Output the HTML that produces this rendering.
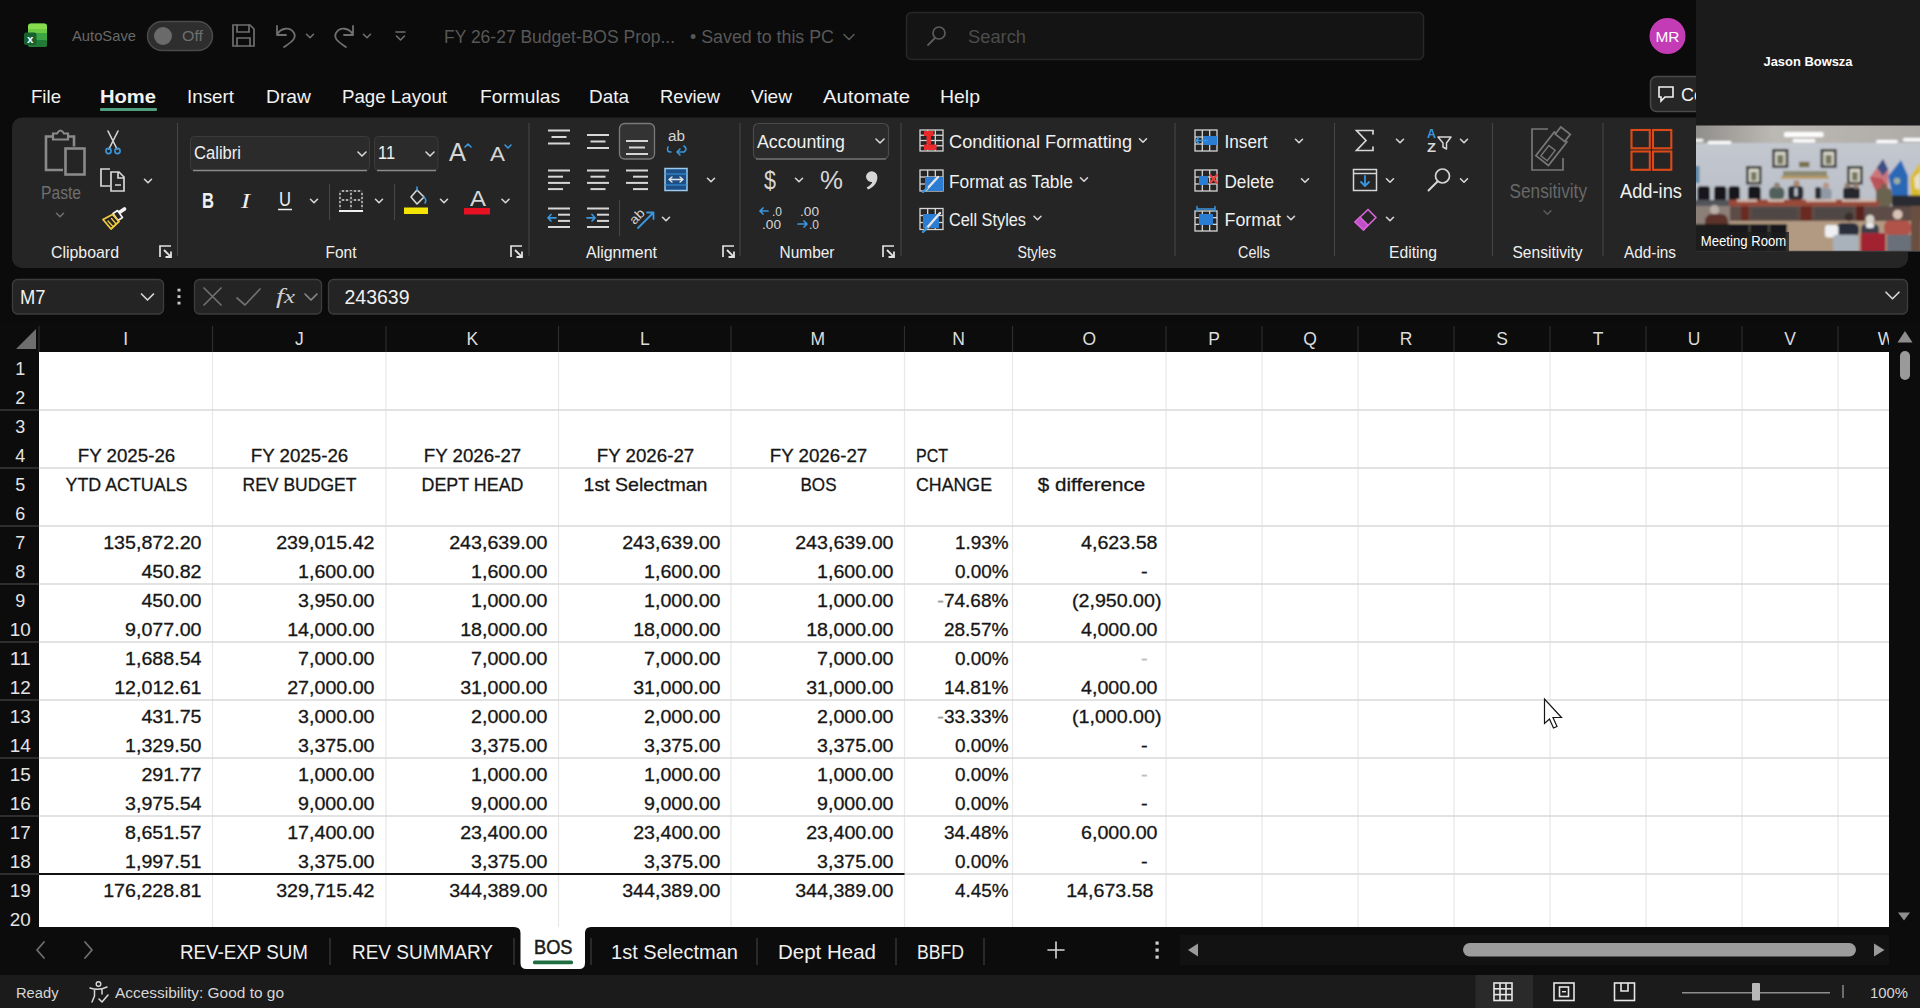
<!DOCTYPE html>
<html lang="en"><head><meta charset="utf-8"><title>FY 26-27 Budget-BOS Proposed - Excel</title>
<style>html,body{margin:0;padding:0;background:#0b0b0b;overflow:hidden}svg{display:block}text{font-family:"Liberation Sans",sans-serif;white-space:pre}</style></head>
<body>
<svg width="1920" height="1008" viewBox="0 0 1920 1008">
<rect x="0" y="0" width="1920" height="1008" fill="#0b0b0b"/>
<rect x="28" y="23.5" width="19" height="23.5" fill="#2f9a3f" rx="3"/>
<rect x="28" y="23.5" width="19" height="8.5" fill="#86dc4c" rx="3"/>
<rect x="28" y="29" width="19" height="4" fill="#6ccb42"/>
<rect x="28" y="33" width="19" height="7" fill="#3aa744"/>
<rect x="28" y="40" width="19" height="7" fill="#227a36" rx="2"/>
<rect x="24" y="32.5" width="12.5" height="12.5" fill="#17602f" rx="2"/>
<text x="27" y="42.5" font-size="11.5" fill="#ffffff" font-weight="bold">x</text>
<text x="72" y="41" font-size="14.5" fill="#686868" textLength="64" lengthAdjust="spacingAndGlyphs">AutoSave</text>
<rect x="147.5" y="21.5" width="65" height="29" fill="#2e2e2e" rx="14.5" stroke="#4a4a4a" stroke-width="1.5"/>
<circle cx="163" cy="36" r="9" fill="#6a6a6a"/>
<text x="182" y="41" font-size="14.5" fill="#6f6f6f" textLength="21" lengthAdjust="spacingAndGlyphs">Off</text>
<path d="M233 25 H250 L254 29 V46 H233 Z" fill="none" stroke="#6f6f6f" stroke-width="1.7" stroke-linejoin="miter" stroke-linecap="round"/>
<path d="M237 25 V32 H249 V25 M237 46 V38 H250 V46" fill="none" stroke="#6f6f6f" stroke-width="1.7" stroke-linejoin="miter" stroke-linecap="round"/>
<path d="M277 26 V35 H286 M277 35 C280 28 290 26 294 33 C297 39 290 43 284 47" fill="none" stroke="#6f6f6f" stroke-width="1.8" stroke-linejoin="round" stroke-linecap="round"/>
<path d="M306.5 34.25 L310 37.75 L313.5 34.25" fill="none" stroke="#6f6f6f" stroke-width="1.6" stroke-linejoin="round" stroke-linecap="round"/>
<path d="M353 26 V35 H344 M353 35 C350 28 340 26 336 33 C333 39 340 43 346 47" fill="none" stroke="#6f6f6f" stroke-width="1.8" stroke-linejoin="round" stroke-linecap="round"/>
<path d="M363.5 34.25 L367 37.75 L370.5 34.25" fill="none" stroke="#6f6f6f" stroke-width="1.6" stroke-linejoin="round" stroke-linecap="round"/>
<path d="M396 32 H405 M396.5 36 L400.5 40 L404.5 36" fill="none" stroke="#6f6f6f" stroke-width="1.6" stroke-linejoin="round" stroke-linecap="round"/>
<text x="444" y="43" font-size="17.5" fill="#585858" textLength="231" lengthAdjust="spacingAndGlyphs">FY 26-27 Budget-BOS Prop...</text>
<text x="690" y="43" font-size="17.5" fill="#585858" textLength="144" lengthAdjust="spacingAndGlyphs">• Saved to this PC</text>
<path d="M844.0 34.5 L849 39.5 L854.0 34.5" fill="none" stroke="#585858" stroke-width="1.6" stroke-linejoin="round" stroke-linecap="round"/>
<rect x="906.5" y="12.5" width="517" height="47" fill="#141414" rx="5" stroke="#272727" stroke-width="1.5"/>
<circle cx="939" cy="33" r="6" fill="none" stroke="#5c5c5c" stroke-width="1.7"/>
<path d="M935 38 L928 45" fill="none" stroke="#5c5c5c" stroke-width="1.8" stroke-linejoin="round" stroke-linecap="round"/>
<text x="968" y="43" font-size="17.5" fill="#4c4c4c" textLength="58" lengthAdjust="spacingAndGlyphs">Search</text>
<circle cx="1667.5" cy="36" r="18" fill="#c43bb6"/>
<text x="1667.5" y="42" font-size="14.5" fill="#ffffff" textLength="24" lengthAdjust="spacingAndGlyphs" text-anchor="middle">MR</text>
<text x="31" y="103" font-size="19" fill="#f2f2f2" textLength="30" lengthAdjust="spacingAndGlyphs">File</text>
<text x="100" y="103" font-size="19" fill="#f2f2f2" textLength="56" lengthAdjust="spacingAndGlyphs" font-weight="bold">Home</text>
<text x="187" y="103" font-size="19" fill="#f2f2f2" textLength="47" lengthAdjust="spacingAndGlyphs">Insert</text>
<text x="266" y="103" font-size="19" fill="#f2f2f2" textLength="45" lengthAdjust="spacingAndGlyphs">Draw</text>
<text x="342" y="103" font-size="19" fill="#f2f2f2" textLength="105" lengthAdjust="spacingAndGlyphs">Page Layout</text>
<text x="480" y="103" font-size="19" fill="#f2f2f2" textLength="80" lengthAdjust="spacingAndGlyphs">Formulas</text>
<text x="589" y="103" font-size="19" fill="#f2f2f2" textLength="40" lengthAdjust="spacingAndGlyphs">Data</text>
<text x="660" y="103" font-size="19" fill="#f2f2f2" textLength="60" lengthAdjust="spacingAndGlyphs">Review</text>
<text x="751" y="103" font-size="19" fill="#f2f2f2" textLength="41" lengthAdjust="spacingAndGlyphs">View</text>
<text x="823" y="103" font-size="19" fill="#f2f2f2" textLength="87" lengthAdjust="spacingAndGlyphs">Automate</text>
<text x="940" y="103" font-size="19" fill="#f2f2f2" textLength="40" lengthAdjust="spacingAndGlyphs">Help</text>
<rect x="100" y="108" width="57" height="3" fill="#4f9f80" rx="1"/>
<rect x="1650.5" y="76.5" width="70" height="35" fill="#262626" rx="6" stroke="#4a4a4a" stroke-width="1.5"/>
<path d="M1659 87 H1673 V97 H1665 L1661 101 V97 H1659 Z" fill="none" stroke="#f2f2f2" stroke-width="1.6" stroke-linejoin="miter" stroke-linecap="round"/>
<text x="1681" y="101" font-size="18" fill="#f2f2f2">Co</text>
<rect x="12" y="117.5" width="1896" height="150.5" fill="#252525" rx="10"/>
<path d="M54 136.5 H46 V170 H63 M68 136.5 H74 V146.5" fill="none" stroke="#8a8a8a" stroke-width="2.6" stroke-linejoin="miter" stroke-linecap="butt"/>
<path d="M53 139.5 V133.5 H57 Q60.5 127.5 64 133.5 H68 V139.5 Z" fill="none" stroke="#8a8a8a" stroke-width="2.2" stroke-linejoin="miter" stroke-linecap="round"/>
<rect x="65.5" y="148.5" width="19" height="26" fill="none" stroke="#8a8a8a" stroke-width="2.6"/>
<text x="41" y="199" font-size="17.5" fill="#6f6f6f" textLength="40" lengthAdjust="spacingAndGlyphs">Paste</text>
<path d="M56.5 213.25 L60 216.75 L63.5 213.25" fill="none" stroke="#6f6f6f" stroke-width="1.6" stroke-linejoin="round" stroke-linecap="round"/>
<path d="M108 131 L117 149 M118 131 L109 149" fill="none" stroke="#d6d6d6" stroke-width="1.6" stroke-linejoin="round" stroke-linecap="round"/>
<circle cx="108.5" cy="151" r="2.6" fill="none" stroke="#3a96dd" stroke-width="1.6"/>
<circle cx="117.5" cy="151" r="2.6" fill="none" stroke="#3a96dd" stroke-width="1.6"/>
<path d="M110 186 H101 V169 H110" fill="none" stroke="#d6d6d6" stroke-width="1.7" stroke-linejoin="miter" stroke-linecap="butt"/>
<path d="M111 172 H119 L124 177 V191 H111 Z M118 172 V178 H124" fill="none" stroke="#d6d6d6" stroke-width="1.7" stroke-linejoin="miter" stroke-linecap="round"/>
<line x1="115" y1="185" x2="121" y2="185" stroke="#d6d6d6" stroke-width="1.5"/>
<path d="M144.5 179.25 L148 182.75 L151.5 179.25" fill="none" stroke="#d6d6d6" stroke-width="1.6" stroke-linejoin="round" stroke-linecap="round"/>
<path d="M124.5 209 L118.5 213" fill="none" stroke="#f4f4f4" stroke-width="3.6" stroke-linejoin="round" stroke-linecap="round"/>
<path d="M113 213.5 L117.5 210.5 L122.5 217.5 L118 220.5 Z" fill="#252525" stroke="#f4f4f4" stroke-width="1.6" stroke-linejoin="round" stroke-linecap="round"/>
<path d="M112.5 214.5 L103 219.5 L111 229 L119 221.5 Z" fill="none" stroke="#f2cb3f" stroke-width="1.8" stroke-linejoin="round" stroke-linecap="round"/>
<path d="M108 221 L113 226.5 M111.5 218.5 L116 224" fill="none" stroke="#f2cb3f" stroke-width="1.3" stroke-linejoin="round" stroke-linecap="round"/>
<text x="51" y="257.5" font-size="17" fill="#f0f0f0" textLength="68" lengthAdjust="spacingAndGlyphs">Clipboard</text>
<path d="M160 257 V246 H171" fill="none" stroke="#e2e2e2" stroke-width="1.7" stroke-linejoin="miter" stroke-linecap="butt"/>
<path d="M164 250 L171 257 M171 251.5 V257 H165.5" fill="none" stroke="#e2e2e2" stroke-width="1.8" stroke-linejoin="miter" stroke-linecap="butt"/>
<line x1="177.5" y1="123" x2="177.5" y2="256" stroke="#444444" stroke-width="1.2"/>
<rect x="190.5" y="136.5" width="179" height="34" fill="#2b2b2b" rx="4" stroke="#3b3b3b" stroke-width="1"/>
<line x1="193" y1="170.5" x2="367" y2="170.5" stroke="#8a8a8a" stroke-width="1.3"/>
<text x="194" y="159" font-size="17.5" fill="#f0f0f0" textLength="47" lengthAdjust="spacingAndGlyphs">Calibri</text>
<path d="M358.0 152.0 L362 156.0 L366.0 152.0" fill="none" stroke="#d6d6d6" stroke-width="1.6" stroke-linejoin="round" stroke-linecap="round"/>
<rect x="374.5" y="136.5" width="63.5" height="34" fill="#2b2b2b" rx="4" stroke="#3b3b3b" stroke-width="1"/>
<line x1="377" y1="170.5" x2="436" y2="170.5" stroke="#8a8a8a" stroke-width="1.3"/>
<text x="378" y="159" font-size="17.5" fill="#f0f0f0" textLength="17" lengthAdjust="spacingAndGlyphs">11</text>
<path d="M426.0 152.0 L430 156.0 L434.0 152.0" fill="none" stroke="#d6d6d6" stroke-width="1.6" stroke-linejoin="round" stroke-linecap="round"/>
<text x="449" y="161" font-size="25" fill="#d6d6d6" textLength="17" lengthAdjust="spacingAndGlyphs">A</text>
<path d="M465 147 L468 144 L471 147" fill="none" stroke="#3a96dd" stroke-width="1.6" stroke-linejoin="round" stroke-linecap="round"/>
<text x="490" y="161" font-size="21" fill="#d6d6d6" textLength="15" lengthAdjust="spacingAndGlyphs">A</text>
<path d="M505 145 L508 148 L511 145" fill="none" stroke="#3a96dd" stroke-width="1.6" stroke-linejoin="round" stroke-linecap="round"/>
<text x="202" y="207.5" font-size="22" fill="#f0f0f0" textLength="12" lengthAdjust="spacingAndGlyphs" font-weight="bold">B</text>
<text x="241" y="207.5" font-size="22" fill="#f0f0f0" textLength="9" lengthAdjust="spacingAndGlyphs" style="font-family:'Liberation Serif',serif" font-style="italic">I</text>
<text x="279" y="206" font-size="20" fill="#f0f0f0" textLength="12" lengthAdjust="spacingAndGlyphs">U</text>
<line x1="278" y1="209.5" x2="292" y2="209.5" stroke="#f0f0f0" stroke-width="1.5"/>
<path d="M310.5 199.25 L314 202.75 L317.5 199.25" fill="none" stroke="#d6d6d6" stroke-width="1.6" stroke-linejoin="round" stroke-linecap="round"/>
<line x1="329.5" y1="184" x2="329.5" y2="220" stroke="#444444" stroke-width="1.2"/>
<path d="M340 191 H362 M340 191 V209 M362 191 V209 M351 191 V209 M340 200 H362" fill="none" stroke="#d6d6d6" stroke-width="1.4" stroke-linejoin="round" stroke-linecap="butt"/>
<path d="M340 191 H362 M340 191 V209 M362 191 V209 M351 191 V209 M340 200 H362" stroke="#252525" stroke-width="1.6" stroke-dasharray="2 2" fill="none"/>
<line x1="339" y1="211" x2="363" y2="211" stroke="#f0f0f0" stroke-width="2"/>
<path d="M375.5 199.25 L379 202.75 L382.5 199.25" fill="none" stroke="#d6d6d6" stroke-width="1.6" stroke-linejoin="round" stroke-linecap="round"/>
<line x1="394.5" y1="184" x2="394.5" y2="220" stroke="#444444" stroke-width="1.2"/>
<path d="M411 197 L417 190 L424 197 L417 204 Z" fill="none" stroke="#d6d6d6" stroke-width="1.6" stroke-linejoin="round" stroke-linecap="round"/>
<path d="M417 190 V187 M424 197 Q427 200 425 203" fill="none" stroke="#3a96dd" stroke-width="1.6" stroke-linejoin="round" stroke-linecap="round"/>
<rect x="404" y="207.5" width="24" height="6.5" fill="#f5e400"/>
<path d="M440.5 199.25 L444 202.75 L447.5 199.25" fill="none" stroke="#d6d6d6" stroke-width="1.6" stroke-linejoin="round" stroke-linecap="round"/>
<text x="470" y="205.5" font-size="22" fill="#d6d6d6" textLength="16" lengthAdjust="spacingAndGlyphs">A</text>
<rect x="464" y="208" width="26" height="6.5" fill="#e81123"/>
<path d="M502.0 199.25 L505.5 202.75 L509.0 199.25" fill="none" stroke="#d6d6d6" stroke-width="1.6" stroke-linejoin="round" stroke-linecap="round"/>
<text x="325.5" y="257.5" font-size="17" fill="#f0f0f0" textLength="31" lengthAdjust="spacingAndGlyphs">Font</text>
<path d="M511 257 V246 H522" fill="none" stroke="#e2e2e2" stroke-width="1.7" stroke-linejoin="miter" stroke-linecap="butt"/>
<path d="M515 250 L522 257 M522 251.5 V257 H516.5" fill="none" stroke="#e2e2e2" stroke-width="1.8" stroke-linejoin="miter" stroke-linecap="butt"/>
<line x1="529" y1="123" x2="529" y2="256" stroke="#444444" stroke-width="1.2"/>
<line x1="548.0" y1="130.5" x2="570.0" y2="130.5" stroke="#d6d6d6" stroke-width="2"/>
<line x1="551.5" y1="137.0" x2="566.5" y2="137.0" stroke="#d6d6d6" stroke-width="2"/>
<line x1="548.0" y1="143.5" x2="570.0" y2="143.5" stroke="#d6d6d6" stroke-width="2"/>
<line x1="587.0" y1="135.0" x2="609.0" y2="135.0" stroke="#d6d6d6" stroke-width="2"/>
<line x1="590.5" y1="141.5" x2="605.5" y2="141.5" stroke="#d6d6d6" stroke-width="2"/>
<line x1="587.0" y1="148.0" x2="609.0" y2="148.0" stroke="#d6d6d6" stroke-width="2"/>
<rect x="619.5" y="123.5" width="35" height="35.5" fill="#333333" rx="5" stroke="#7a7a7a" stroke-width="1.3"/>
<line x1="626.0" y1="141.0" x2="648.0" y2="141.0" stroke="#d6d6d6" stroke-width="2"/>
<line x1="629.0" y1="147.5" x2="645.0" y2="147.5" stroke="#d6d6d6" stroke-width="2"/>
<line x1="626.0" y1="154.0" x2="648.0" y2="154.0" stroke="#d6d6d6" stroke-width="2"/>
<text x="668" y="141" font-size="14" fill="#d6d6d6" textLength="17" lengthAdjust="spacingAndGlyphs">ab</text>
<path d="M668 147 Q666 152 671 152 M678 152 H684 Q688 149 684 146" fill="none" stroke="#3a96dd" stroke-width="1.6" stroke-linejoin="round" stroke-linecap="round"/>
<path d="M680 149 L677 152 L680 155" fill="none" stroke="#3a96dd" stroke-width="1.6" stroke-linejoin="round" stroke-linecap="round"/>
<line x1="548" y1="170.5" x2="570" y2="170.5" stroke="#d6d6d6" stroke-width="2"/>
<line x1="548" y1="176.7" x2="563" y2="176.7" stroke="#d6d6d6" stroke-width="2"/>
<line x1="548" y1="182.9" x2="570" y2="182.9" stroke="#d6d6d6" stroke-width="2"/>
<line x1="548" y1="189.1" x2="563" y2="189.1" stroke="#d6d6d6" stroke-width="2"/>
<line x1="587.0" y1="170.5" x2="609.0" y2="170.5" stroke="#d6d6d6" stroke-width="2"/>
<line x1="590.5" y1="176.7" x2="605.5" y2="176.7" stroke="#d6d6d6" stroke-width="2"/>
<line x1="587.0" y1="182.9" x2="609.0" y2="182.9" stroke="#d6d6d6" stroke-width="2"/>
<line x1="590.5" y1="189.1" x2="605.5" y2="189.1" stroke="#d6d6d6" stroke-width="2"/>
<line x1="626" y1="170.5" x2="648" y2="170.5" stroke="#d6d6d6" stroke-width="2"/>
<line x1="633" y1="176.7" x2="648" y2="176.7" stroke="#d6d6d6" stroke-width="2"/>
<line x1="626" y1="182.9" x2="648" y2="182.9" stroke="#d6d6d6" stroke-width="2"/>
<line x1="633" y1="189.1" x2="648" y2="189.1" stroke="#d6d6d6" stroke-width="2"/>
<rect x="665" y="168.5" width="22" height="22" fill="#1b4f86" stroke="#9ccbf0" stroke-width="1.5"/>
<path d="M665 174 H687 M665 185 H687" fill="none" stroke="#3a96dd" stroke-width="1.2" stroke-linejoin="round" stroke-linecap="round"/>
<path d="M669 179.5 H683 M672 177 L669 179.5 L672 182 M680 177 L683 179.5 L680 182" fill="none" stroke="#e6e6e6" stroke-width="1.3" stroke-linejoin="round" stroke-linecap="round"/>
<path d="M707.5 178.25 L711 181.75 L714.5 178.25" fill="none" stroke="#d6d6d6" stroke-width="1.6" stroke-linejoin="round" stroke-linecap="round"/>
<line x1="548" y1="208.5" x2="570" y2="208.5" stroke="#d6d6d6" stroke-width="2"/>
<line x1="548" y1="227" x2="570" y2="227" stroke="#d6d6d6" stroke-width="2"/>
<line x1="558" y1="214.7" x2="570" y2="214.7" stroke="#d6d6d6" stroke-width="2"/>
<line x1="558" y1="220.9" x2="570" y2="220.9" stroke="#d6d6d6" stroke-width="2"/>
<path d="M556 217.8 H548 M551 214.5 L548 217.8 L551 221" fill="none" stroke="#3a96dd" stroke-width="1.7" stroke-linejoin="round" stroke-linecap="round"/>
<line x1="587" y1="208.5" x2="609" y2="208.5" stroke="#d6d6d6" stroke-width="2"/>
<line x1="587" y1="227" x2="609" y2="227" stroke="#d6d6d6" stroke-width="2"/>
<line x1="597" y1="214.7" x2="609" y2="214.7" stroke="#d6d6d6" stroke-width="2"/>
<line x1="597" y1="220.9" x2="609" y2="220.9" stroke="#d6d6d6" stroke-width="2"/>
<path d="M587 217.8 H595 M592 214.5 L595 217.8 L592 221" fill="none" stroke="#3a96dd" stroke-width="1.7" stroke-linejoin="round" stroke-linecap="round"/>
<line x1="619.5" y1="200" x2="619.5" y2="236" stroke="#444444" stroke-width="1.2"/>
<g transform="rotate(-45 638 216)"><text x="629" y="220" font-size="13" fill="#d6d6d6" textLength="16" lengthAdjust="spacingAndGlyphs">ab</text></g>
<path d="M638 228 L653 213 M647 212.5 H653.5 V219" fill="none" stroke="#3a96dd" stroke-width="1.8" stroke-linejoin="round" stroke-linecap="round"/>
<path d="M662.5 217.25 L666 220.75 L669.5 217.25" fill="none" stroke="#d6d6d6" stroke-width="1.6" stroke-linejoin="round" stroke-linecap="round"/>
<text x="586" y="257.5" font-size="17" fill="#f0f0f0" textLength="71" lengthAdjust="spacingAndGlyphs">Alignment</text>
<path d="M723 257 V246 H734" fill="none" stroke="#e2e2e2" stroke-width="1.7" stroke-linejoin="miter" stroke-linecap="butt"/>
<path d="M727 250 L734 257 M734 251.5 V257 H728.5" fill="none" stroke="#e2e2e2" stroke-width="1.8" stroke-linejoin="miter" stroke-linecap="butt"/>
<line x1="740" y1="123" x2="740" y2="256" stroke="#444444" stroke-width="1.2"/>
<rect x="753.5" y="123.5" width="135" height="35.5" fill="#2b2b2b" rx="5" stroke="#4a4a4a" stroke-width="1.2"/>
<line x1="756" y1="159" x2="886" y2="159" stroke="#8a8a8a" stroke-width="1.2"/>
<text x="757" y="147.5" font-size="17.5" fill="#f0f0f0" textLength="88" lengthAdjust="spacingAndGlyphs">Accounting</text>
<path d="M876.0 139.0 L880 143.0 L884.0 139.0" fill="none" stroke="#d6d6d6" stroke-width="1.6" stroke-linejoin="round" stroke-linecap="round"/>
<text x="764" y="189" font-size="25" fill="#d6d6d6" textLength="12" lengthAdjust="spacingAndGlyphs">$</text>
<path d="M795.5 178.25 L799 181.75 L802.5 178.25" fill="none" stroke="#d6d6d6" stroke-width="1.6" stroke-linejoin="round" stroke-linecap="round"/>
<text x="820" y="189" font-size="25" fill="#d6d6d6" textLength="23" lengthAdjust="spacingAndGlyphs">%</text>
<path d="M866 177 a5.7 5.7 0 1 1 11.4 0 c0 6 -4 10.5 -9.5 12.5 l-1.2 -2.2 c3 -1.3 5.2 -3.4 5.5 -5.3 a5.7 5.7 0 0 1 -6.2 -5 z" fill="#d6d6d6"/>
<path d="M768 211 H760 M763 208 L760 211 L763 214" fill="none" stroke="#3a96dd" stroke-width="1.7" stroke-linejoin="round" stroke-linecap="round"/>
<text x="772" y="216" font-size="12.5" fill="#d6d6d6" textLength="10" lengthAdjust="spacingAndGlyphs">.0</text>
<text x="762" y="229" font-size="12.5" fill="#d6d6d6" textLength="19" lengthAdjust="spacingAndGlyphs">.00</text>
<text x="800" y="216" font-size="12.5" fill="#d6d6d6" textLength="19" lengthAdjust="spacingAndGlyphs">.00</text>
<path d="M798 224 H807 M804 221 L807 224 L804 227" fill="none" stroke="#3a96dd" stroke-width="1.7" stroke-linejoin="round" stroke-linecap="round"/>
<text x="809" y="229" font-size="12.5" fill="#d6d6d6" textLength="10" lengthAdjust="spacingAndGlyphs">.0</text>
<text x="779.5" y="257.5" font-size="17" fill="#f0f0f0" textLength="55" lengthAdjust="spacingAndGlyphs">Number</text>
<path d="M883 257 V246 H894" fill="none" stroke="#e2e2e2" stroke-width="1.7" stroke-linejoin="miter" stroke-linecap="butt"/>
<path d="M887 250 L894 257 M894 251.5 V257 H888.5" fill="none" stroke="#e2e2e2" stroke-width="1.8" stroke-linejoin="miter" stroke-linecap="butt"/>
<line x1="901" y1="123" x2="901" y2="256" stroke="#444444" stroke-width="1.2"/>
<rect x="920" y="130" width="23" height="21" fill="none" stroke="#d6d6d6" stroke-width="1.3"/>
<line x1="920" y1="135.25" x2="943" y2="135.25" stroke="#d6d6d6" stroke-width="1.3"/>
<line x1="920" y1="140.5" x2="943" y2="140.5" stroke="#d6d6d6" stroke-width="1.3"/>
<line x1="920" y1="145.75" x2="943" y2="145.75" stroke="#d6d6d6" stroke-width="1.3"/>
<line x1="927.6666666666666" y1="130" x2="927.6666666666666" y2="151" stroke="#d6d6d6" stroke-width="1.3"/>
<line x1="935.3333333333334" y1="130" x2="935.3333333333334" y2="151" stroke="#d6d6d6" stroke-width="1.3"/>
<rect x="924" y="131" width="9.5" height="5" fill="#ea2a2a"/>
<rect x="926.5" y="136" width="4.5" height="8.5" fill="#ea2a2a"/>
<rect x="924" y="144.5" width="12.5" height="5.5" fill="#ea2a2a"/>
<text x="949" y="148" font-size="17.5" fill="#f0f0f0" textLength="183" lengthAdjust="spacingAndGlyphs">Conditional Formatting</text>
<path d="M1139.5 138.75 L1143 142.25 L1146.5 138.75" fill="none" stroke="#d6d6d6" stroke-width="1.6" stroke-linejoin="round" stroke-linecap="round"/>
<rect x="920" y="170" width="23" height="21" fill="none" stroke="#d6d6d6" stroke-width="1.3"/>
<line x1="920" y1="177.0" x2="943" y2="177.0" stroke="#d6d6d6" stroke-width="1.3"/>
<line x1="920" y1="184.0" x2="943" y2="184.0" stroke="#d6d6d6" stroke-width="1.3"/>
<line x1="927.6666666666666" y1="170" x2="927.6666666666666" y2="191" stroke="#d6d6d6" stroke-width="1.3"/>
<line x1="935.3333333333334" y1="170" x2="935.3333333333334" y2="191" stroke="#d6d6d6" stroke-width="1.3"/>
<rect x="925" y="177" width="18" height="14" fill="#2b7cd3"/>
<path d="M926 190 L938 177" fill="none" stroke="#e6e6e6" stroke-width="2.4" stroke-linejoin="round" stroke-linecap="round"/>
<path d="M923 192 L927 188" fill="none" stroke="#3a96dd" stroke-width="2.4" stroke-linejoin="round" stroke-linecap="round"/>
<text x="949" y="187.5" font-size="17.5" fill="#f0f0f0" textLength="124" lengthAdjust="spacingAndGlyphs">Format as Table</text>
<path d="M1080.5 177.75 L1084 181.25 L1087.5 177.75" fill="none" stroke="#d6d6d6" stroke-width="1.6" stroke-linejoin="round" stroke-linecap="round"/>
<rect x="920" y="208.5" width="23" height="21" fill="none" stroke="#d6d6d6" stroke-width="1.3"/>
<line x1="920" y1="215.5" x2="943" y2="215.5" stroke="#d6d6d6" stroke-width="1.3"/>
<line x1="920" y1="222.5" x2="943" y2="222.5" stroke="#d6d6d6" stroke-width="1.3"/>
<line x1="927.6666666666666" y1="208.5" x2="927.6666666666666" y2="229.5" stroke="#d6d6d6" stroke-width="1.3"/>
<line x1="935.3333333333334" y1="208.5" x2="935.3333333333334" y2="229.5" stroke="#d6d6d6" stroke-width="1.3"/>
<rect x="923" y="214" width="16" height="14" fill="#2b7cd3"/>
<path d="M926 229 L940 213" fill="none" stroke="#e6e6e6" stroke-width="2.4" stroke-linejoin="round" stroke-linecap="round"/>
<path d="M923 232 L927 228" fill="none" stroke="#3a96dd" stroke-width="2.4" stroke-linejoin="round" stroke-linecap="round"/>
<text x="949" y="225.5" font-size="17.5" fill="#f0f0f0" textLength="77" lengthAdjust="spacingAndGlyphs">Cell Styles</text>
<path d="M1034.0 216.25 L1037.5 219.75 L1041.0 216.25" fill="none" stroke="#d6d6d6" stroke-width="1.6" stroke-linejoin="round" stroke-linecap="round"/>
<text x="1017.5" y="257.5" font-size="17" fill="#f0f0f0" textLength="38.5" lengthAdjust="spacingAndGlyphs">Styles</text>
<line x1="1175" y1="123" x2="1175" y2="256" stroke="#444444" stroke-width="1.2"/>
<rect x="1195" y="130" width="22" height="21" fill="none" stroke="#d6d6d6" stroke-width="1.3"/>
<line x1="1195" y1="137.0" x2="1217" y2="137.0" stroke="#d6d6d6" stroke-width="1.3"/>
<line x1="1195" y1="144.0" x2="1217" y2="144.0" stroke="#d6d6d6" stroke-width="1.3"/>
<line x1="1202.3333333333333" y1="130" x2="1202.3333333333333" y2="151" stroke="#d6d6d6" stroke-width="1.3"/>
<line x1="1209.6666666666667" y1="130" x2="1209.6666666666667" y2="151" stroke="#d6d6d6" stroke-width="1.3"/>
<rect x="1203" y="136" width="14" height="9" fill="#2b7cd3"/>
<path d="M1207 140.5 H1196 M1199 137.5 L1196 140.5 L1199 143.5" fill="none" stroke="#3a96dd" stroke-width="1.7" stroke-linejoin="round" stroke-linecap="round"/>
<text x="1224.5" y="148" font-size="17.5" fill="#f0f0f0" textLength="43" lengthAdjust="spacingAndGlyphs">Insert</text>
<path d="M1295.5 139.25 L1299 142.75 L1302.5 139.25" fill="none" stroke="#d6d6d6" stroke-width="1.6" stroke-linejoin="round" stroke-linecap="round"/>
<rect x="1195" y="170" width="22" height="21" fill="none" stroke="#d6d6d6" stroke-width="1.3"/>
<line x1="1195" y1="177.0" x2="1217" y2="177.0" stroke="#d6d6d6" stroke-width="1.3"/>
<line x1="1195" y1="184.0" x2="1217" y2="184.0" stroke="#d6d6d6" stroke-width="1.3"/>
<line x1="1202.3333333333333" y1="170" x2="1202.3333333333333" y2="191" stroke="#d6d6d6" stroke-width="1.3"/>
<line x1="1209.6666666666667" y1="170" x2="1209.6666666666667" y2="191" stroke="#d6d6d6" stroke-width="1.3"/>
<rect x="1199" y="176" width="9" height="9" fill="#2b7cd3"/>
<path d="M1210 175 L1217 183 M1217 175 L1210 183" fill="none" stroke="#e8413c" stroke-width="2" stroke-linejoin="round" stroke-linecap="round"/>
<text x="1224.5" y="187.5" font-size="17.5" fill="#f0f0f0" textLength="49.5" lengthAdjust="spacingAndGlyphs">Delete</text>
<path d="M1301.5 178.75 L1305 182.25 L1308.5 178.75" fill="none" stroke="#d6d6d6" stroke-width="1.6" stroke-linejoin="round" stroke-linecap="round"/>
<rect x="1195" y="211" width="22" height="20" fill="none" stroke="#d6d6d6" stroke-width="1.3"/>
<line x1="1195" y1="217.66666666666666" x2="1217" y2="217.66666666666666" stroke="#d6d6d6" stroke-width="1.3"/>
<line x1="1195" y1="224.33333333333334" x2="1217" y2="224.33333333333334" stroke="#d6d6d6" stroke-width="1.3"/>
<line x1="1202.3333333333333" y1="211" x2="1202.3333333333333" y2="231" stroke="#d6d6d6" stroke-width="1.3"/>
<line x1="1209.6666666666667" y1="211" x2="1209.6666666666667" y2="231" stroke="#d6d6d6" stroke-width="1.3"/>
<rect x="1199" y="214" width="14" height="11" fill="#2b7cd3"/>
<path d="M1197 209 H1215 M1197 206.5 V211.5 M1215 206.5 V211.5" fill="none" stroke="#3a96dd" stroke-width="1.5" stroke-linejoin="round" stroke-linecap="round"/>
<text x="1224.5" y="225.5" font-size="17.5" fill="#f0f0f0" textLength="56.5" lengthAdjust="spacingAndGlyphs">Format</text>
<path d="M1287.5 216.25 L1291 219.75 L1294.5 216.25" fill="none" stroke="#d6d6d6" stroke-width="1.6" stroke-linejoin="round" stroke-linecap="round"/>
<text x="1238" y="257.5" font-size="17" fill="#f0f0f0" textLength="32" lengthAdjust="spacingAndGlyphs">Cells</text>
<line x1="1334.5" y1="123" x2="1334.5" y2="256" stroke="#444444" stroke-width="1.2"/>
<path d="M1373 134 V130.5 H1356.5 L1366 140.5 L1356.5 150.5 H1373 V147" fill="none" stroke="#d6d6d6" stroke-width="1.7" stroke-linejoin="miter" stroke-linecap="round"/>
<path d="M1396.5 139.25 L1400 142.75 L1403.5 139.25" fill="none" stroke="#d6d6d6" stroke-width="1.6" stroke-linejoin="round" stroke-linecap="round"/>
<rect x="1353.5" y="169.5" width="23" height="21" fill="none" stroke="#d6d6d6" stroke-width="1.5"/>
<line x1="1353.5" y1="173.5" x2="1376.5" y2="173.5" stroke="#d6d6d6" stroke-width="1.5"/>
<path d="M1365 176 V186 M1361 182 L1365 186 L1369 182" fill="none" stroke="#3a96dd" stroke-width="1.8" stroke-linejoin="round" stroke-linecap="round"/>
<path d="M1386.5 178.75 L1390 182.25 L1393.5 178.75" fill="none" stroke="#d6d6d6" stroke-width="1.6" stroke-linejoin="round" stroke-linecap="round"/>
<path d="M1355 222 L1368 209.5 L1376 217.5 L1363.5 230 Z" fill="#252525" stroke="#d864d8" stroke-width="1.7" stroke-linejoin="round" stroke-linecap="round"/>
<path d="M1355 222 L1360 217 L1368 225 L1363.5 230 Z" fill="#c050c8" stroke="#d864d8" stroke-width="1.2" stroke-linejoin="round" stroke-linecap="round"/>
<path d="M1386.5 217.25 L1390 220.75 L1393.5 217.25" fill="none" stroke="#d6d6d6" stroke-width="1.6" stroke-linejoin="round" stroke-linecap="round"/>
<text x="1427" y="138" font-size="12.5" fill="#3a96dd" textLength="9" lengthAdjust="spacingAndGlyphs" font-weight="bold">A</text>
<text x="1427" y="152" font-size="12.5" fill="#d6d6d6" textLength="9" lengthAdjust="spacingAndGlyphs" font-weight="bold">Z</text>
<path d="M1438 137 H1451 L1446.5 143 V149 L1443 147 V143 Z" fill="none" stroke="#d6d6d6" stroke-width="1.5" stroke-linejoin="round" stroke-linecap="round"/>
<path d="M1460.5 139.25 L1464 142.75 L1467.5 139.25" fill="none" stroke="#d6d6d6" stroke-width="1.6" stroke-linejoin="round" stroke-linecap="round"/>
<circle cx="1442.5" cy="176" r="7" fill="none" stroke="#d6d6d6" stroke-width="1.7"/>
<path d="M1437.5 181.5 L1428.5 190.5" fill="none" stroke="#d6d6d6" stroke-width="1.9" stroke-linejoin="round" stroke-linecap="round"/>
<path d="M1460.5 178.75 L1464 182.25 L1467.5 178.75" fill="none" stroke="#d6d6d6" stroke-width="1.6" stroke-linejoin="round" stroke-linecap="round"/>
<text x="1389" y="257.5" font-size="17" fill="#f0f0f0" textLength="48" lengthAdjust="spacingAndGlyphs">Editing</text>
<line x1="1492.5" y1="123" x2="1492.5" y2="256" stroke="#444444" stroke-width="1.2"/>
<path d="M1548 129 H1532 V170 H1563 V158" fill="none" stroke="#777777" stroke-width="1.7" stroke-linejoin="miter" stroke-linecap="butt"/>
<g transform="rotate(38 1552 148)"><rect x="1544" y="134" width="16" height="30" fill="#252525" stroke="#777777" stroke-width="1.7"/><rect x="1548" y="148" width="8" height="13" fill="none" stroke="#777777" stroke-width="1.4"/><rect x="1546" y="126" width="12" height="9" fill="#252525" stroke="#777777" stroke-width="1.7"/></g>
<text x="1509.5" y="197.5" font-size="19.5" fill="#686868" textLength="77.5" lengthAdjust="spacingAndGlyphs">Sensitivity</text>
<path d="M1544.0 210.75 L1547.5 214.25 L1551.0 210.75" fill="none" stroke="#5a5a5a" stroke-width="1.6" stroke-linejoin="round" stroke-linecap="round"/>
<text x="1512.5" y="257.5" font-size="17" fill="#f0f0f0" textLength="70" lengthAdjust="spacingAndGlyphs">Sensitivity</text>
<line x1="1603" y1="123" x2="1603" y2="256" stroke="#444444" stroke-width="1.2"/>
<rect x="1631.5" y="130" width="18.3" height="18.3" fill="none" stroke="#dc4a18" stroke-width="2.1"/>
<rect x="1653" y="130" width="18.3" height="18.3" fill="none" stroke="#dc4a18" stroke-width="2.1"/>
<rect x="1631.5" y="151.5" width="18.3" height="18.3" fill="none" stroke="#dc4a18" stroke-width="2.1"/>
<rect x="1653" y="151.5" width="18.3" height="18.3" fill="none" stroke="#dc4a18" stroke-width="2.1"/>
<text x="1620" y="197.5" font-size="19.5" fill="#f0f0f0" textLength="62" lengthAdjust="spacingAndGlyphs">Add-ins</text>
<text x="1624" y="257.5" font-size="17" fill="#f0f0f0" textLength="52" lengthAdjust="spacingAndGlyphs">Add-ins</text>
<rect x="12.5" y="279.5" width="151" height="34.5" fill="#242424" rx="5" stroke="#3d3d3d" stroke-width="1.3"/>
<text x="20" y="303.5" font-size="19.5" fill="#f0f0f0" textLength="25.5" lengthAdjust="spacingAndGlyphs">M7</text>
<path d="M141.5 294.0 L147.5 300.0 L153.5 294.0" fill="none" stroke="#d6d6d6" stroke-width="1.7" stroke-linejoin="round" stroke-linecap="round"/>
<rect x="177.5" y="288.7" width="3" height="2.8" fill="#c8c8c8"/>
<rect x="177.5" y="295.2" width="3" height="2.8" fill="#c8c8c8"/>
<rect x="177.5" y="301.7" width="3" height="2.8" fill="#c8c8c8"/>
<rect x="194.5" y="279.5" width="127" height="34.5" fill="#242424" rx="5" stroke="#3d3d3d" stroke-width="1.3"/>
<path d="M204 288 L221 305 M221 288 L204 305" fill="none" stroke="#707070" stroke-width="1.7" stroke-linejoin="round" stroke-linecap="round"/>
<path d="M237 298 L245 305 L260 289" fill="none" stroke="#707070" stroke-width="1.7" stroke-linejoin="round" stroke-linecap="round"/>
<text x="276" y="303" font-size="21" fill="#d0d0d0" textLength="8" lengthAdjust="spacingAndGlyphs" style="font-family:'Liberation Serif',serif" font-style="italic">f</text>
<text x="284" y="303" font-size="19" fill="#d0d0d0" textLength="11" lengthAdjust="spacingAndGlyphs" style="font-family:'Liberation Serif',serif" font-style="italic">x</text>
<path d="M305.0 294.0 L311 300.0 L317.0 294.0" fill="none" stroke="#8a8a8a" stroke-width="1.6" stroke-linejoin="round" stroke-linecap="round"/>
<rect x="328.5" y="279.5" width="1579" height="34.5" fill="#242424" rx="5" stroke="#3d3d3d" stroke-width="1.3"/>
<text x="344.5" y="303.5" font-size="19.5" fill="#f0f0f0" textLength="65" lengthAdjust="spacingAndGlyphs">243639</text>
<path d="M1886.0 292.25 L1892.5 298.75 L1899.0 292.25" fill="none" stroke="#d6d6d6" stroke-width="1.7" stroke-linejoin="round" stroke-linecap="round"/>
<rect x="39" y="352" width="1850" height="575" fill="#ffffff"/>
<rect x="0" y="322" width="1889" height="30" fill="#0c0c0c"/>
<text x="125.75" y="344.5" font-size="17.5" fill="#dcdcdc" text-anchor="middle">I</text>
<line x1="39" y1="326" x2="39" y2="352" stroke="#2e2e2e" stroke-width="1.2"/>
<text x="299.25" y="344.5" font-size="17.5" fill="#dcdcdc" text-anchor="middle">J</text>
<line x1="212.5" y1="326" x2="212.5" y2="352" stroke="#2e2e2e" stroke-width="1.2"/>
<line x1="212.5" y1="352" x2="212.5" y2="927" stroke="#e8e8e8" stroke-width="1.2"/>
<text x="472.25" y="344.5" font-size="17.5" fill="#dcdcdc" text-anchor="middle">K</text>
<line x1="386" y1="326" x2="386" y2="352" stroke="#2e2e2e" stroke-width="1.2"/>
<line x1="386" y1="352" x2="386" y2="927" stroke="#e8e8e8" stroke-width="1.2"/>
<text x="644.75" y="344.5" font-size="17.5" fill="#dcdcdc" text-anchor="middle">L</text>
<line x1="558.5" y1="326" x2="558.5" y2="352" stroke="#2e2e2e" stroke-width="1.2"/>
<line x1="558.5" y1="352" x2="558.5" y2="927" stroke="#e8e8e8" stroke-width="1.2"/>
<text x="817.75" y="344.5" font-size="17.5" fill="#dcdcdc" text-anchor="middle">M</text>
<line x1="731" y1="326" x2="731" y2="352" stroke="#2e2e2e" stroke-width="1.2"/>
<line x1="731" y1="352" x2="731" y2="927" stroke="#e8e8e8" stroke-width="1.2"/>
<text x="958.5" y="344.5" font-size="17.5" fill="#dcdcdc" text-anchor="middle">N</text>
<line x1="904.5" y1="326" x2="904.5" y2="352" stroke="#2e2e2e" stroke-width="1.2"/>
<line x1="904.5" y1="352" x2="904.5" y2="927" stroke="#e8e8e8" stroke-width="1.2"/>
<text x="1089.25" y="344.5" font-size="17.5" fill="#dcdcdc" text-anchor="middle">O</text>
<line x1="1012.5" y1="326" x2="1012.5" y2="352" stroke="#2e2e2e" stroke-width="1.2"/>
<line x1="1012.5" y1="352" x2="1012.5" y2="927" stroke="#e8e8e8" stroke-width="1.2"/>
<text x="1214.0" y="344.5" font-size="17.5" fill="#dcdcdc" text-anchor="middle">P</text>
<line x1="1166" y1="326" x2="1166" y2="352" stroke="#2e2e2e" stroke-width="1.2"/>
<line x1="1166" y1="352" x2="1166" y2="927" stroke="#e8e8e8" stroke-width="1.2"/>
<text x="1310.0" y="344.5" font-size="17.5" fill="#dcdcdc" text-anchor="middle">Q</text>
<line x1="1262" y1="326" x2="1262" y2="352" stroke="#2e2e2e" stroke-width="1.2"/>
<line x1="1262" y1="352" x2="1262" y2="927" stroke="#e8e8e8" stroke-width="1.2"/>
<text x="1406.0" y="344.5" font-size="17.5" fill="#dcdcdc" text-anchor="middle">R</text>
<line x1="1358" y1="326" x2="1358" y2="352" stroke="#2e2e2e" stroke-width="1.2"/>
<line x1="1358" y1="352" x2="1358" y2="927" stroke="#e8e8e8" stroke-width="1.2"/>
<text x="1502.0" y="344.5" font-size="17.5" fill="#dcdcdc" text-anchor="middle">S</text>
<line x1="1454" y1="326" x2="1454" y2="352" stroke="#2e2e2e" stroke-width="1.2"/>
<line x1="1454" y1="352" x2="1454" y2="927" stroke="#e8e8e8" stroke-width="1.2"/>
<text x="1598.0" y="344.5" font-size="17.5" fill="#dcdcdc" text-anchor="middle">T</text>
<line x1="1550" y1="326" x2="1550" y2="352" stroke="#2e2e2e" stroke-width="1.2"/>
<line x1="1550" y1="352" x2="1550" y2="927" stroke="#e8e8e8" stroke-width="1.2"/>
<text x="1694.0" y="344.5" font-size="17.5" fill="#dcdcdc" text-anchor="middle">U</text>
<line x1="1646" y1="326" x2="1646" y2="352" stroke="#2e2e2e" stroke-width="1.2"/>
<line x1="1646" y1="352" x2="1646" y2="927" stroke="#e8e8e8" stroke-width="1.2"/>
<text x="1790.0" y="344.5" font-size="17.5" fill="#dcdcdc" text-anchor="middle">V</text>
<line x1="1742" y1="326" x2="1742" y2="352" stroke="#2e2e2e" stroke-width="1.2"/>
<line x1="1742" y1="352" x2="1742" y2="927" stroke="#e8e8e8" stroke-width="1.2"/>
<svg x="1838" y="322" width="51" height="30" viewBox="1838 322 51 30">
<text x="1886.0" y="344.5" font-size="17.5" fill="#dcdcdc" text-anchor="middle">W</text>
</svg>
<line x1="1838" y1="326" x2="1838" y2="352" stroke="#2e2e2e" stroke-width="1.2"/>
<line x1="1838" y1="352" x2="1838" y2="927" stroke="#e8e8e8" stroke-width="1.2"/>
<path d="M36 329 V349 H16 Z" fill="#6e6e6e"/>
<rect x="0" y="352" width="39" height="575" fill="#0c0c0c"/>
<line x1="39" y1="410" x2="1889" y2="410" stroke="#d9d9d9" stroke-width="1.6"/>
<line x1="0" y1="410" x2="39" y2="410" stroke="#3a3a3a" stroke-width="1.6"/>
<line x1="39" y1="468" x2="1889" y2="468" stroke="#d9d9d9" stroke-width="1.6"/>
<line x1="0" y1="468" x2="39" y2="468" stroke="#3a3a3a" stroke-width="1.6"/>
<line x1="39" y1="526" x2="1889" y2="526" stroke="#d9d9d9" stroke-width="1.6"/>
<line x1="0" y1="526" x2="39" y2="526" stroke="#3a3a3a" stroke-width="1.6"/>
<line x1="39" y1="584" x2="1889" y2="584" stroke="#d9d9d9" stroke-width="1.6"/>
<line x1="0" y1="584" x2="39" y2="584" stroke="#3a3a3a" stroke-width="1.6"/>
<line x1="39" y1="642" x2="1889" y2="642" stroke="#d9d9d9" stroke-width="1.6"/>
<line x1="0" y1="642" x2="39" y2="642" stroke="#3a3a3a" stroke-width="1.6"/>
<line x1="39" y1="700" x2="1889" y2="700" stroke="#d9d9d9" stroke-width="1.6"/>
<line x1="0" y1="700" x2="39" y2="700" stroke="#3a3a3a" stroke-width="1.6"/>
<line x1="39" y1="758" x2="1889" y2="758" stroke="#d9d9d9" stroke-width="1.6"/>
<line x1="0" y1="758" x2="39" y2="758" stroke="#3a3a3a" stroke-width="1.6"/>
<line x1="39" y1="816" x2="1889" y2="816" stroke="#d9d9d9" stroke-width="1.6"/>
<line x1="0" y1="816" x2="39" y2="816" stroke="#3a3a3a" stroke-width="1.6"/>
<line x1="39" y1="874" x2="1889" y2="874" stroke="#d9d9d9" stroke-width="1.6"/>
<line x1="0" y1="874" x2="39" y2="874" stroke="#3a3a3a" stroke-width="1.6"/>
<svg x="0" y="352" width="1889" height="575" viewBox="0 352 1889 575">
<text x="15.2" y="375" font-size="18.5" fill="#e4e4e4" textLength="10" lengthAdjust="spacingAndGlyphs">1</text>
<text x="15.2" y="404" font-size="18.5" fill="#e4e4e4" textLength="10" lengthAdjust="spacingAndGlyphs">2</text>
<text x="15.2" y="433" font-size="18.5" fill="#e4e4e4" textLength="10" lengthAdjust="spacingAndGlyphs">3</text>
<text x="15.2" y="462" font-size="18.5" fill="#e4e4e4" textLength="10" lengthAdjust="spacingAndGlyphs">4</text>
<text x="15.2" y="491" font-size="18.5" fill="#e4e4e4" textLength="10" lengthAdjust="spacingAndGlyphs">5</text>
<text x="15.2" y="520" font-size="18.5" fill="#e4e4e4" textLength="10" lengthAdjust="spacingAndGlyphs">6</text>
<text x="15.2" y="549" font-size="18.5" fill="#e4e4e4" textLength="10" lengthAdjust="spacingAndGlyphs">7</text>
<text x="15.2" y="578" font-size="18.5" fill="#e4e4e4" textLength="10" lengthAdjust="spacingAndGlyphs">8</text>
<text x="15.2" y="607" font-size="18.5" fill="#e4e4e4" textLength="10" lengthAdjust="spacingAndGlyphs">9</text>
<text x="9.7" y="636" font-size="18.5" fill="#e4e4e4" textLength="21" lengthAdjust="spacingAndGlyphs">10</text>
<text x="9.7" y="665" font-size="18.5" fill="#e4e4e4" textLength="21" lengthAdjust="spacingAndGlyphs">11</text>
<text x="9.7" y="694" font-size="18.5" fill="#e4e4e4" textLength="21" lengthAdjust="spacingAndGlyphs">12</text>
<text x="9.7" y="723" font-size="18.5" fill="#e4e4e4" textLength="21" lengthAdjust="spacingAndGlyphs">13</text>
<text x="9.7" y="752" font-size="18.5" fill="#e4e4e4" textLength="21" lengthAdjust="spacingAndGlyphs">14</text>
<text x="9.7" y="781" font-size="18.5" fill="#e4e4e4" textLength="21" lengthAdjust="spacingAndGlyphs">15</text>
<text x="9.7" y="810" font-size="18.5" fill="#e4e4e4" textLength="21" lengthAdjust="spacingAndGlyphs">16</text>
<text x="9.7" y="839" font-size="18.5" fill="#e4e4e4" textLength="21" lengthAdjust="spacingAndGlyphs">17</text>
<text x="9.7" y="868" font-size="18.5" fill="#e4e4e4" textLength="21" lengthAdjust="spacingAndGlyphs">18</text>
<text x="9.7" y="897" font-size="18.5" fill="#e4e4e4" textLength="21" lengthAdjust="spacingAndGlyphs">19</text>
<text x="9.7" y="926" font-size="18.5" fill="#e4e4e4" textLength="21" lengthAdjust="spacingAndGlyphs">20</text>
<text x="77.8" y="462" font-size="19" fill="#161616" stroke="#161616" stroke-width="0.3" textLength="97.4" lengthAdjust="spacingAndGlyphs">FY 2025-26</text>
<text x="65.5" y="491" font-size="19" fill="#161616" stroke="#161616" stroke-width="0.3" textLength="122" lengthAdjust="spacingAndGlyphs">YTD ACTUALS</text>
<text x="250.8" y="462" font-size="19" fill="#161616" stroke="#161616" stroke-width="0.3" textLength="97.4" lengthAdjust="spacingAndGlyphs">FY 2025-26</text>
<text x="242.5" y="491" font-size="19" fill="#161616" stroke="#161616" stroke-width="0.3" textLength="114" lengthAdjust="spacingAndGlyphs">REV BUDGET</text>
<text x="423.8" y="462" font-size="19" fill="#161616" stroke="#161616" stroke-width="0.3" textLength="97.4" lengthAdjust="spacingAndGlyphs">FY 2026-27</text>
<text x="421.5" y="491" font-size="19" fill="#161616" stroke="#161616" stroke-width="0.3" textLength="102" lengthAdjust="spacingAndGlyphs">DEPT HEAD</text>
<text x="596.8" y="462" font-size="19" fill="#161616" stroke="#161616" stroke-width="0.3" textLength="97.4" lengthAdjust="spacingAndGlyphs">FY 2026-27</text>
<text x="583.5" y="491" font-size="19" fill="#161616" stroke="#161616" stroke-width="0.3" textLength="124" lengthAdjust="spacingAndGlyphs">1st Selectman</text>
<text x="769.8" y="462" font-size="19" fill="#161616" stroke="#161616" stroke-width="0.3" textLength="97.4" lengthAdjust="spacingAndGlyphs">FY 2026-27</text>
<text x="800.5" y="491" font-size="19" fill="#161616" stroke="#161616" stroke-width="0.3" textLength="36" lengthAdjust="spacingAndGlyphs">BOS</text>
<text x="916" y="462" font-size="19" fill="#161616" stroke="#161616" stroke-width="0.3" textLength="32" lengthAdjust="spacingAndGlyphs">PCT</text>
<text x="916" y="491" font-size="19" fill="#161616" stroke="#161616" stroke-width="0.3" textLength="76" lengthAdjust="spacingAndGlyphs">CHANGE</text>
<text x="1037.8" y="491" font-size="19" fill="#161616" stroke="#161616" stroke-width="0.3" textLength="107.5" lengthAdjust="spacingAndGlyphs">$ difference</text>
<text x="103.2" y="549" font-size="19" fill="#161616" stroke="#161616" stroke-width="0.3" textLength="98.3" lengthAdjust="spacingAndGlyphs">135,872.20</text>
<text x="276.2" y="549" font-size="19" fill="#161616" stroke="#161616" stroke-width="0.3" textLength="98.3" lengthAdjust="spacingAndGlyphs">239,015.42</text>
<text x="449.2" y="549" font-size="19" fill="#161616" stroke="#161616" stroke-width="0.3" textLength="98.3" lengthAdjust="spacingAndGlyphs">243,639.00</text>
<text x="622.2" y="549" font-size="19" fill="#161616" stroke="#161616" stroke-width="0.3" textLength="98.3" lengthAdjust="spacingAndGlyphs">243,639.00</text>
<text x="795.2" y="549" font-size="19" fill="#161616" stroke="#161616" stroke-width="0.3" textLength="98.3" lengthAdjust="spacingAndGlyphs">243,639.00</text>
<text x="954.9" y="549" font-size="19" fill="#161616" stroke="#161616" stroke-width="0.3" textLength="53.6" lengthAdjust="spacingAndGlyphs">1.93%</text>
<text x="1081.1" y="549" font-size="19" fill="#161616" stroke="#161616" stroke-width="0.3" textLength="76.4" lengthAdjust="spacingAndGlyphs">4,623.58</text>
<text x="141.4" y="578" font-size="19" fill="#161616" stroke="#161616" stroke-width="0.3" textLength="60.1" lengthAdjust="spacingAndGlyphs">450.82</text>
<text x="298.1" y="578" font-size="19" fill="#161616" stroke="#161616" stroke-width="0.3" textLength="76.4" lengthAdjust="spacingAndGlyphs">1,600.00</text>
<text x="471.1" y="578" font-size="19" fill="#161616" stroke="#161616" stroke-width="0.3" textLength="76.4" lengthAdjust="spacingAndGlyphs">1,600.00</text>
<text x="644.1" y="578" font-size="19" fill="#161616" stroke="#161616" stroke-width="0.3" textLength="76.4" lengthAdjust="spacingAndGlyphs">1,600.00</text>
<text x="817.1" y="578" font-size="19" fill="#161616" stroke="#161616" stroke-width="0.3" textLength="76.4" lengthAdjust="spacingAndGlyphs">1,600.00</text>
<text x="954.9" y="578" font-size="19" fill="#161616" stroke="#161616" stroke-width="0.3" textLength="53.6" lengthAdjust="spacingAndGlyphs">0.00%</text>
<text x="1140.9" y="578" font-size="19" fill="#161616" stroke="#161616" stroke-width="0.3" textLength="6.6" lengthAdjust="spacingAndGlyphs">-</text>
<text x="141.4" y="607" font-size="19" fill="#161616" stroke="#161616" stroke-width="0.3" textLength="60.1" lengthAdjust="spacingAndGlyphs">450.00</text>
<text x="298.1" y="607" font-size="19" fill="#161616" stroke="#161616" stroke-width="0.3" textLength="76.4" lengthAdjust="spacingAndGlyphs">3,950.00</text>
<text x="471.1" y="607" font-size="19" fill="#161616" stroke="#161616" stroke-width="0.3" textLength="76.4" lengthAdjust="spacingAndGlyphs">1,000.00</text>
<text x="644.1" y="607" font-size="19" fill="#161616" stroke="#161616" stroke-width="0.3" textLength="76.4" lengthAdjust="spacingAndGlyphs">1,000.00</text>
<text x="817.1" y="607" font-size="19" fill="#161616" stroke="#161616" stroke-width="0.3" textLength="76.4" lengthAdjust="spacingAndGlyphs">1,000.00</text>
<text x="943.9" y="607" font-size="19" fill="#161616" stroke="#161616" stroke-width="0.3" textLength="64.6" lengthAdjust="spacingAndGlyphs">74.68%</text>
<text x="937.3" y="607" font-size="19" fill="#9a9a9a" stroke="#9a9a9a" stroke-width="0.3" textLength="6.6" lengthAdjust="spacingAndGlyphs">-</text>
<text x="1072.0" y="607" font-size="19" fill="#161616" stroke="#161616" stroke-width="0.3" textLength="89.5" lengthAdjust="spacingAndGlyphs">(2,950.00)</text>
<text x="125.1" y="636" font-size="19" fill="#161616" stroke="#161616" stroke-width="0.3" textLength="76.4" lengthAdjust="spacingAndGlyphs">9,077.00</text>
<text x="287.2" y="636" font-size="19" fill="#161616" stroke="#161616" stroke-width="0.3" textLength="87.3" lengthAdjust="spacingAndGlyphs">14,000.00</text>
<text x="460.2" y="636" font-size="19" fill="#161616" stroke="#161616" stroke-width="0.3" textLength="87.3" lengthAdjust="spacingAndGlyphs">18,000.00</text>
<text x="633.2" y="636" font-size="19" fill="#161616" stroke="#161616" stroke-width="0.3" textLength="87.3" lengthAdjust="spacingAndGlyphs">18,000.00</text>
<text x="806.2" y="636" font-size="19" fill="#161616" stroke="#161616" stroke-width="0.3" textLength="87.3" lengthAdjust="spacingAndGlyphs">18,000.00</text>
<text x="943.9" y="636" font-size="19" fill="#161616" stroke="#161616" stroke-width="0.3" textLength="64.6" lengthAdjust="spacingAndGlyphs">28.57%</text>
<text x="1081.1" y="636" font-size="19" fill="#161616" stroke="#161616" stroke-width="0.3" textLength="76.4" lengthAdjust="spacingAndGlyphs">4,000.00</text>
<text x="125.1" y="665" font-size="19" fill="#161616" stroke="#161616" stroke-width="0.3" textLength="76.4" lengthAdjust="spacingAndGlyphs">1,688.54</text>
<text x="298.1" y="665" font-size="19" fill="#161616" stroke="#161616" stroke-width="0.3" textLength="76.4" lengthAdjust="spacingAndGlyphs">7,000.00</text>
<text x="471.1" y="665" font-size="19" fill="#161616" stroke="#161616" stroke-width="0.3" textLength="76.4" lengthAdjust="spacingAndGlyphs">7,000.00</text>
<text x="644.1" y="665" font-size="19" fill="#161616" stroke="#161616" stroke-width="0.3" textLength="76.4" lengthAdjust="spacingAndGlyphs">7,000.00</text>
<text x="817.1" y="665" font-size="19" fill="#161616" stroke="#161616" stroke-width="0.3" textLength="76.4" lengthAdjust="spacingAndGlyphs">7,000.00</text>
<text x="954.9" y="665" font-size="19" fill="#161616" stroke="#161616" stroke-width="0.3" textLength="53.6" lengthAdjust="spacingAndGlyphs">0.00%</text>
<text x="1140.9" y="665" font-size="19" fill="#bdbdbd" stroke="#bdbdbd" stroke-width="0.3" textLength="6.6" lengthAdjust="spacingAndGlyphs">-</text>
<text x="114.2" y="694" font-size="19" fill="#161616" stroke="#161616" stroke-width="0.3" textLength="87.3" lengthAdjust="spacingAndGlyphs">12,012.61</text>
<text x="287.2" y="694" font-size="19" fill="#161616" stroke="#161616" stroke-width="0.3" textLength="87.3" lengthAdjust="spacingAndGlyphs">27,000.00</text>
<text x="460.2" y="694" font-size="19" fill="#161616" stroke="#161616" stroke-width="0.3" textLength="87.3" lengthAdjust="spacingAndGlyphs">31,000.00</text>
<text x="633.2" y="694" font-size="19" fill="#161616" stroke="#161616" stroke-width="0.3" textLength="87.3" lengthAdjust="spacingAndGlyphs">31,000.00</text>
<text x="806.2" y="694" font-size="19" fill="#161616" stroke="#161616" stroke-width="0.3" textLength="87.3" lengthAdjust="spacingAndGlyphs">31,000.00</text>
<text x="943.9" y="694" font-size="19" fill="#161616" stroke="#161616" stroke-width="0.3" textLength="64.6" lengthAdjust="spacingAndGlyphs">14.81%</text>
<text x="1081.1" y="694" font-size="19" fill="#161616" stroke="#161616" stroke-width="0.3" textLength="76.4" lengthAdjust="spacingAndGlyphs">4,000.00</text>
<text x="141.4" y="723" font-size="19" fill="#161616" stroke="#161616" stroke-width="0.3" textLength="60.1" lengthAdjust="spacingAndGlyphs">431.75</text>
<text x="298.1" y="723" font-size="19" fill="#161616" stroke="#161616" stroke-width="0.3" textLength="76.4" lengthAdjust="spacingAndGlyphs">3,000.00</text>
<text x="471.1" y="723" font-size="19" fill="#161616" stroke="#161616" stroke-width="0.3" textLength="76.4" lengthAdjust="spacingAndGlyphs">2,000.00</text>
<text x="644.1" y="723" font-size="19" fill="#161616" stroke="#161616" stroke-width="0.3" textLength="76.4" lengthAdjust="spacingAndGlyphs">2,000.00</text>
<text x="817.1" y="723" font-size="19" fill="#161616" stroke="#161616" stroke-width="0.3" textLength="76.4" lengthAdjust="spacingAndGlyphs">2,000.00</text>
<text x="943.9" y="723" font-size="19" fill="#161616" stroke="#161616" stroke-width="0.3" textLength="64.6" lengthAdjust="spacingAndGlyphs">33.33%</text>
<text x="937.3" y="723" font-size="19" fill="#9a9a9a" stroke="#9a9a9a" stroke-width="0.3" textLength="6.6" lengthAdjust="spacingAndGlyphs">-</text>
<text x="1072.0" y="723" font-size="19" fill="#161616" stroke="#161616" stroke-width="0.3" textLength="89.5" lengthAdjust="spacingAndGlyphs">(1,000.00)</text>
<text x="125.1" y="752" font-size="19" fill="#161616" stroke="#161616" stroke-width="0.3" textLength="76.4" lengthAdjust="spacingAndGlyphs">1,329.50</text>
<text x="298.1" y="752" font-size="19" fill="#161616" stroke="#161616" stroke-width="0.3" textLength="76.4" lengthAdjust="spacingAndGlyphs">3,375.00</text>
<text x="471.1" y="752" font-size="19" fill="#161616" stroke="#161616" stroke-width="0.3" textLength="76.4" lengthAdjust="spacingAndGlyphs">3,375.00</text>
<text x="644.1" y="752" font-size="19" fill="#161616" stroke="#161616" stroke-width="0.3" textLength="76.4" lengthAdjust="spacingAndGlyphs">3,375.00</text>
<text x="817.1" y="752" font-size="19" fill="#161616" stroke="#161616" stroke-width="0.3" textLength="76.4" lengthAdjust="spacingAndGlyphs">3,375.00</text>
<text x="954.9" y="752" font-size="19" fill="#161616" stroke="#161616" stroke-width="0.3" textLength="53.6" lengthAdjust="spacingAndGlyphs">0.00%</text>
<text x="1140.9" y="752" font-size="19" fill="#161616" stroke="#161616" stroke-width="0.3" textLength="6.6" lengthAdjust="spacingAndGlyphs">-</text>
<text x="141.4" y="781" font-size="19" fill="#161616" stroke="#161616" stroke-width="0.3" textLength="60.1" lengthAdjust="spacingAndGlyphs">291.77</text>
<text x="298.1" y="781" font-size="19" fill="#161616" stroke="#161616" stroke-width="0.3" textLength="76.4" lengthAdjust="spacingAndGlyphs">1,000.00</text>
<text x="471.1" y="781" font-size="19" fill="#161616" stroke="#161616" stroke-width="0.3" textLength="76.4" lengthAdjust="spacingAndGlyphs">1,000.00</text>
<text x="644.1" y="781" font-size="19" fill="#161616" stroke="#161616" stroke-width="0.3" textLength="76.4" lengthAdjust="spacingAndGlyphs">1,000.00</text>
<text x="817.1" y="781" font-size="19" fill="#161616" stroke="#161616" stroke-width="0.3" textLength="76.4" lengthAdjust="spacingAndGlyphs">1,000.00</text>
<text x="954.9" y="781" font-size="19" fill="#161616" stroke="#161616" stroke-width="0.3" textLength="53.6" lengthAdjust="spacingAndGlyphs">0.00%</text>
<text x="1140.9" y="781" font-size="19" fill="#bdbdbd" stroke="#bdbdbd" stroke-width="0.3" textLength="6.6" lengthAdjust="spacingAndGlyphs">-</text>
<text x="125.1" y="810" font-size="19" fill="#161616" stroke="#161616" stroke-width="0.3" textLength="76.4" lengthAdjust="spacingAndGlyphs">3,975.54</text>
<text x="298.1" y="810" font-size="19" fill="#161616" stroke="#161616" stroke-width="0.3" textLength="76.4" lengthAdjust="spacingAndGlyphs">9,000.00</text>
<text x="471.1" y="810" font-size="19" fill="#161616" stroke="#161616" stroke-width="0.3" textLength="76.4" lengthAdjust="spacingAndGlyphs">9,000.00</text>
<text x="644.1" y="810" font-size="19" fill="#161616" stroke="#161616" stroke-width="0.3" textLength="76.4" lengthAdjust="spacingAndGlyphs">9,000.00</text>
<text x="817.1" y="810" font-size="19" fill="#161616" stroke="#161616" stroke-width="0.3" textLength="76.4" lengthAdjust="spacingAndGlyphs">9,000.00</text>
<text x="954.9" y="810" font-size="19" fill="#161616" stroke="#161616" stroke-width="0.3" textLength="53.6" lengthAdjust="spacingAndGlyphs">0.00%</text>
<text x="1140.9" y="810" font-size="19" fill="#161616" stroke="#161616" stroke-width="0.3" textLength="6.6" lengthAdjust="spacingAndGlyphs">-</text>
<text x="125.1" y="839" font-size="19" fill="#161616" stroke="#161616" stroke-width="0.3" textLength="76.4" lengthAdjust="spacingAndGlyphs">8,651.57</text>
<text x="287.2" y="839" font-size="19" fill="#161616" stroke="#161616" stroke-width="0.3" textLength="87.3" lengthAdjust="spacingAndGlyphs">17,400.00</text>
<text x="460.2" y="839" font-size="19" fill="#161616" stroke="#161616" stroke-width="0.3" textLength="87.3" lengthAdjust="spacingAndGlyphs">23,400.00</text>
<text x="633.2" y="839" font-size="19" fill="#161616" stroke="#161616" stroke-width="0.3" textLength="87.3" lengthAdjust="spacingAndGlyphs">23,400.00</text>
<text x="806.2" y="839" font-size="19" fill="#161616" stroke="#161616" stroke-width="0.3" textLength="87.3" lengthAdjust="spacingAndGlyphs">23,400.00</text>
<text x="943.9" y="839" font-size="19" fill="#161616" stroke="#161616" stroke-width="0.3" textLength="64.6" lengthAdjust="spacingAndGlyphs">34.48%</text>
<text x="1081.1" y="839" font-size="19" fill="#161616" stroke="#161616" stroke-width="0.3" textLength="76.4" lengthAdjust="spacingAndGlyphs">6,000.00</text>
<text x="125.1" y="868" font-size="19" fill="#161616" stroke="#161616" stroke-width="0.3" textLength="76.4" lengthAdjust="spacingAndGlyphs">1,997.51</text>
<text x="298.1" y="868" font-size="19" fill="#161616" stroke="#161616" stroke-width="0.3" textLength="76.4" lengthAdjust="spacingAndGlyphs">3,375.00</text>
<text x="471.1" y="868" font-size="19" fill="#161616" stroke="#161616" stroke-width="0.3" textLength="76.4" lengthAdjust="spacingAndGlyphs">3,375.00</text>
<text x="644.1" y="868" font-size="19" fill="#161616" stroke="#161616" stroke-width="0.3" textLength="76.4" lengthAdjust="spacingAndGlyphs">3,375.00</text>
<text x="817.1" y="868" font-size="19" fill="#161616" stroke="#161616" stroke-width="0.3" textLength="76.4" lengthAdjust="spacingAndGlyphs">3,375.00</text>
<text x="954.9" y="868" font-size="19" fill="#161616" stroke="#161616" stroke-width="0.3" textLength="53.6" lengthAdjust="spacingAndGlyphs">0.00%</text>
<text x="1140.9" y="868" font-size="19" fill="#161616" stroke="#161616" stroke-width="0.3" textLength="6.6" lengthAdjust="spacingAndGlyphs">-</text>
<text x="103.2" y="897" font-size="19" fill="#161616" stroke="#161616" stroke-width="0.3" textLength="98.3" lengthAdjust="spacingAndGlyphs">176,228.81</text>
<text x="276.2" y="897" font-size="19" fill="#161616" stroke="#161616" stroke-width="0.3" textLength="98.3" lengthAdjust="spacingAndGlyphs">329,715.42</text>
<text x="449.2" y="897" font-size="19" fill="#161616" stroke="#161616" stroke-width="0.3" textLength="98.3" lengthAdjust="spacingAndGlyphs">344,389.00</text>
<text x="622.2" y="897" font-size="19" fill="#161616" stroke="#161616" stroke-width="0.3" textLength="98.3" lengthAdjust="spacingAndGlyphs">344,389.00</text>
<text x="795.2" y="897" font-size="19" fill="#161616" stroke="#161616" stroke-width="0.3" textLength="98.3" lengthAdjust="spacingAndGlyphs">344,389.00</text>
<text x="954.9" y="897" font-size="19" fill="#161616" stroke="#161616" stroke-width="0.3" textLength="53.6" lengthAdjust="spacingAndGlyphs">4.45%</text>
<text x="1066.2" y="897" font-size="19" fill="#161616" stroke="#161616" stroke-width="0.3" textLength="87.3" lengthAdjust="spacingAndGlyphs">14,673.58</text>
</svg>
<line x1="39" y1="874" x2="904.5" y2="874" stroke="#111111" stroke-width="2"/>
<rect x="1889" y="322" width="31" height="605" fill="#0c0c0c"/>
<path d="M1897.5 342.5 L1905 331 L1912.5 342.5 Z" fill="#8e8e8e"/>
<rect x="1900" y="351" width="10" height="29" fill="#9a9a9a" rx="5"/>
<path d="M1898 912.5 L1910 912.5 L1904 920.5 Z" fill="#8e8e8e"/>
<path d="M1544.5 699 V723.5 L1549.5 719 L1553.5 728 L1557 726.5 L1553 717.5 L1561.5 717.5 Z" fill="#ffffff" stroke="#151515" stroke-width="1.2" stroke-linejoin="miter" stroke-linecap="round"/>
<rect x="0" y="927" width="1920" height="48" fill="#0c0c0c"/>
<rect x="0" y="975" width="1920" height="33" fill="#1b1b1b"/>
<path d="M44 942 L37 950 L44 958" fill="none" stroke="#6f6f6f" stroke-width="1.8" stroke-linejoin="round" stroke-linecap="round"/>
<path d="M85 942 L92 950 L85 958" fill="none" stroke="#6f6f6f" stroke-width="1.8" stroke-linejoin="round" stroke-linecap="round"/>
<text x="180" y="959" font-size="19.5" fill="#f0f0f0" textLength="128" lengthAdjust="spacingAndGlyphs">REV-EXP SUM</text>
<text x="352" y="959" font-size="19.5" fill="#f0f0f0" textLength="141" lengthAdjust="spacingAndGlyphs">REV SUMMARY</text>
<text x="611" y="959" font-size="19.5" fill="#f0f0f0" textLength="127" lengthAdjust="spacingAndGlyphs">1st Selectman</text>
<text x="778" y="959" font-size="19.5" fill="#f0f0f0" textLength="98" lengthAdjust="spacingAndGlyphs">Dept Head</text>
<text x="917" y="959" font-size="19.5" fill="#f0f0f0" textLength="47" lengthAdjust="spacingAndGlyphs">BBFD</text>
<line x1="330" y1="938" x2="330" y2="965" stroke="#3a3a3a" stroke-width="1.3"/>
<line x1="514" y1="938" x2="514" y2="965" stroke="#3a3a3a" stroke-width="1.3"/>
<line x1="591" y1="938" x2="591" y2="965" stroke="#3a3a3a" stroke-width="1.3"/>
<line x1="757" y1="938" x2="757" y2="965" stroke="#3a3a3a" stroke-width="1.3"/>
<line x1="896" y1="938" x2="896" y2="965" stroke="#3a3a3a" stroke-width="1.3"/>
<line x1="984" y1="938" x2="984" y2="965" stroke="#3a3a3a" stroke-width="1.3"/>
<path d="M514 927 Q520.5 927 520.5 933 V963 Q520.5 969 526.5 969 H579 Q585 969 585 963 V933 Q585 927 591 927 Z" fill="#ffffff"/>
<text x="534" y="954" font-size="19.5" fill="#1c1c1c" textLength="38.5" lengthAdjust="spacingAndGlyphs">BOS</text>
<text x="534" y="954" font-size="19.5" fill="none" stroke="#1c1c1c" stroke-width="0.5" textLength="38.5" lengthAdjust="spacingAndGlyphs">BOS</text>
<rect x="533" y="960.5" width="40" height="3.8" fill="#1e6e42" rx="1.5"/>
<path d="M1048 950 H1064 M1056 942 V958" fill="none" stroke="#d8d8d8" stroke-width="1.6" stroke-linejoin="round" stroke-linecap="round"/>
<rect x="1155.5" y="941.5" width="3.2" height="3.2" fill="#d0d0d0"/>
<rect x="1155.5" y="948.5" width="3.2" height="3.2" fill="#d0d0d0"/>
<rect x="1155.5" y="955.5" width="3.2" height="3.2" fill="#d0d0d0"/>
<rect x="1180" y="935" width="709" height="30" fill="#121212"/>
<path d="M1198 943.5 V956.5 L1188 950 Z" fill="#9a9a9a"/>
<rect x="1463" y="943" width="393" height="13.5" fill="#9c9c9c" rx="6.7"/>
<path d="M1874 943.5 V956.5 L1884.5 950 Z" fill="#9a9a9a"/>
<text x="16" y="997.5" font-size="15.5" fill="#d6d6d6" textLength="42.5" lengthAdjust="spacingAndGlyphs">Ready</text>
<circle cx="98.5" cy="984" r="2.3" fill="none" stroke="#d6d6d6" stroke-width="1.4"/>
<path d="M90 988 Q98.5 991 107 987 M94.5 989.5 V996 L92 1002 M102 989.5 V994" fill="none" stroke="#d6d6d6" stroke-width="1.5" stroke-linejoin="round" stroke-linecap="round"/>
<path d="M99 999 L102 1002 L108 995" fill="none" stroke="#d6d6d6" stroke-width="1.6" stroke-linejoin="round" stroke-linecap="round"/>
<text x="115" y="997.5" font-size="15.5" fill="#d6d6d6" textLength="169" lengthAdjust="spacingAndGlyphs">Accessibility: Good to go</text>
<rect x="1475.5" y="975" width="57.5" height="33" fill="#2a2a2a"/>
<rect x="1494" y="983" width="18" height="17.5" fill="none" stroke="#e6e6e6" stroke-width="1.6"/>
<line x1="1500" y1="983" x2="1500" y2="1000.5" stroke="#e6e6e6" stroke-width="1.6"/>
<line x1="1494" y1="988.8" x2="1512" y2="988.8" stroke="#e6e6e6" stroke-width="1.6"/>
<line x1="1506" y1="983" x2="1506" y2="1000.5" stroke="#e6e6e6" stroke-width="1.6"/>
<line x1="1494" y1="994.6" x2="1512" y2="994.6" stroke="#e6e6e6" stroke-width="1.6"/>
<rect x="1554" y="983" width="20" height="17.5" fill="none" stroke="#e6e6e6" stroke-width="1.6"/>
<rect x="1559.5" y="987" width="9" height="9.5" fill="none" stroke="#e6e6e6" stroke-width="1.6"/>
<line x1="1562" y1="991.7" x2="1566" y2="991.7" stroke="#e6e6e6" stroke-width="1.4"/>
<rect x="1614.5" y="983" width="20" height="17.5" fill="none" stroke="#e6e6e6" stroke-width="1.6"/>
<path d="M1621 983 V991 H1628 V983" fill="none" stroke="#e6e6e6" stroke-width="1.6" stroke-linejoin="miter" stroke-linecap="butt"/>
<line x1="1682" y1="992.7" x2="1830" y2="992.7" stroke="#8e8e8e" stroke-width="1.6"/>
<rect x="1752" y="983" width="8" height="17.5" fill="#b8b8b8" rx="1"/>
<line x1="1843" y1="985" x2="1843" y2="998" stroke="#9a9a9a" stroke-width="1.3"/>
<text x="1870" y="998" font-size="15.5" fill="#d6d6d6" textLength="38" lengthAdjust="spacingAndGlyphs">100%</text>
<rect x="1696" y="0" width="224" height="126" fill="#1b1b1b"/>
<text x="1763.5" y="65.5" font-size="12.5" fill="#ffffff" textLength="89" lengthAdjust="spacingAndGlyphs" font-weight="bold">Jason Bowsza</text>
<defs><filter id="bl" x="-5%" y="-5%" width="110%" height="110%"><feGaussianBlur stdDeviation="0.9"/></filter><clipPath id="vc"><rect x="1696" y="125.5" width="224" height="126"/></clipPath><linearGradient id="ceil" x1="0" y1="0" x2="1" y2="0"><stop offset="0" stop-color="#8d8b88"/><stop offset="0.35" stop-color="#bcb9b4"/><stop offset="1" stop-color="#aeaba7"/></linearGradient><linearGradient id="wall" x1="0" y1="0" x2="0" y2="1"><stop offset="0" stop-color="#c6cad2"/><stop offset="1" stop-color="#b4b9c2"/></linearGradient></defs>
<g clip-path="url(#vc)"><g filter="url(#bl)">
<rect x="1690" y="120" width="240" height="140" fill="url(#wall)"/>
<rect x="1690" y="120" width="240" height="23" fill="url(#ceil)"/>
<rect x="1784" y="132" width="39.5" height="5" fill="#fdfdfd" rx="1.6"/>
<rect x="1792.5" y="139" width="23" height="3.4" fill="#fdfdfd" rx="1.6"/>
<rect x="1690" y="139" width="13.5" height="2.8" fill="#fdfdfd" rx="1.6"/>
<rect x="1707.5" y="141" width="24" height="3" fill="#fdfdfd" rx="1.6"/>
<rect x="1876" y="140" width="22" height="3" fill="#fdfdfd" rx="1.6"/>
<rect x="1903" y="138" width="20" height="3.5" fill="#fdfdfd" rx="1.6"/>
<rect x="1772.3" y="149" width="16" height="19" fill="#34322e"/>
<rect x="1774.8999999999999" y="151.6" width="10.8" height="13.8" fill="#d6d6ca"/>
<rect x="1777.3" y="155" width="6" height="9" fill="#77775f"/>
<rect x="1820.6" y="149" width="16" height="19" fill="#34322e"/>
<rect x="1823.1999999999998" y="151.6" width="10.8" height="13.8" fill="#d6d6ca"/>
<rect x="1825.6" y="155" width="6" height="9" fill="#77775f"/>
<rect x="1746" y="166" width="15.5" height="18.5" fill="#34322e"/>
<rect x="1748.6" y="168.6" width="10.3" height="13.3" fill="#d6d6ca"/>
<rect x="1751" y="172" width="5.5" height="8.5" fill="#77775f"/>
<rect x="1847" y="166" width="15.7" height="18.5" fill="#34322e"/>
<rect x="1849.6" y="168.6" width="10.5" height="13.3" fill="#d6d6ca"/>
<rect x="1852" y="172" width="5.699999999999999" height="8.5" fill="#77775f"/>
<rect x="1799" y="161.8" width="10.4" height="5.4" fill="#77724a"/>
<rect x="1783" y="171" width="44" height="5" fill="#8b8a72"/>
<rect x="1781" y="176" width="48" height="2.8" fill="#b89a60"/>
<rect x="1694" y="166" width="5.4" height="17" fill="#5d88a8"/>
<path d="M1869.5 178 L1883 159 L1888.5 170 L1888 193 L1878 196 Z" fill="#c9777c"/>
<path d="M1871.0 177.0 L1879.0 196.0" fill="none" stroke="#b02a34" stroke-width="1.2" stroke-linejoin="round" stroke-linecap="round"/>
<path d="M1873.6 177.5 L1881.6 195.2" fill="none" stroke="#b02a34" stroke-width="1.2" stroke-linejoin="round" stroke-linecap="round"/>
<path d="M1876.2 178.0 L1884.2 194.4" fill="none" stroke="#b02a34" stroke-width="1.2" stroke-linejoin="round" stroke-linecap="round"/>
<path d="M1878.8 178.5 L1886.8 193.6" fill="none" stroke="#b02a34" stroke-width="1.2" stroke-linejoin="round" stroke-linecap="round"/>
<path d="M1881.4 179.0 L1889.4 192.8" fill="none" stroke="#b02a34" stroke-width="1.2" stroke-linejoin="round" stroke-linecap="round"/>
<path d="M1877 167.5 L1883 159 L1888 169 L1883 176 Z" fill="#3a4f86"/>
<path d="M1888.3 176 L1901 160 L1908 176 V196 L1893 198 Z" fill="#2a68b6"/>
<circle cx="1897" cy="181" r="3.2" fill="#9fb0a0"/>
<path d="M1910 178 L1920 162 V203 L1912 201 Z" fill="#dcbc22"/>
<path d="M1914 178 L1920 172 V190 L1915 188 Z" fill="#e8e0c8"/>
<rect x="1697.4" y="186" width="12.6" height="16" fill="#17181c" rx="3.5"/>
<rect x="1714" y="186" width="12.4" height="16" fill="#17181c" rx="3.5"/>
<rect x="1728.4" y="186" width="11.6" height="16" fill="#17181c" rx="3.5"/>
<rect x="1748" y="186" width="12.8" height="16" fill="#17181c" rx="3.5"/>
<rect x="1769" y="187" width="15.4" height="13" fill="#51615c" rx="5"/>
<circle cx="1777" cy="185.5" r="3" fill="#8f7f74"/>
<rect x="1788" y="186" width="15.3" height="14" fill="#262a33" rx="4"/>
<circle cx="1796.5" cy="183.5" r="3.2" fill="#a98874"/>
<rect x="1794.5" y="188" width="3" height="8" fill="#c8ccd2"/>
<rect x="1815" y="188" width="16.6" height="12" fill="#8f9aa6" rx="4"/>
<circle cx="1826" cy="185.5" r="3.1" fill="#b59683"/>
<rect x="1815" y="187" width="6" height="12" fill="#2b2d33" rx="2"/>
<rect x="1843" y="187" width="17" height="13" fill="#25272e" rx="4"/>
<circle cx="1847.5" cy="185.5" r="2.8" fill="#8e7766"/>
<circle cx="1856" cy="186" r="2.8" fill="#9a8170"/>
<rect x="1892" y="195.5" width="30" height="19" fill="#2a2930"/>
<rect x="1876" y="188" width="16" height="19" fill="#6b6350" rx="5"/>
<circle cx="1884" cy="186.5" r="3" fill="#77604f"/>
<rect x="1690" y="200" width="45" height="8" fill="#53545a"/>
<rect x="1729" y="199.6" width="150" height="7" fill="#994a38"/>
<rect x="1737" y="199" width="20" height="3" fill="#d9cfc6" opacity="0.75"/>
<rect x="1768" y="199" width="16" height="3" fill="#d9cfc6" opacity="0.75"/>
<rect x="1806" y="199" width="30" height="3" fill="#d9cfc6" opacity="0.75"/>
<rect x="1842" y="199" width="34" height="3" fill="#d9cfc6" opacity="0.75"/>
<rect x="1690" y="206.3" width="240" height="15" fill="#5d4c47"/>
<rect x="1741" y="206.3" width="7.5" height="15" fill="#6a2c20"/>
<rect x="1800.6" y="206.3" width="11" height="15" fill="#6a2c20"/>
<rect x="1856" y="206.3" width="8" height="15" fill="#5a241c"/>
<rect x="1752" y="207" width="45" height="12" fill="#4a4644" opacity="0.7"/>
<rect x="1815" y="207" width="38" height="12" fill="#4a4644" opacity="0.7"/>
<rect x="1690" y="221" width="240" height="40" fill="#b29a82"/>
<rect x="1690" y="206" width="40" height="18" fill="#8b7f78"/>
<circle cx="1714.5" cy="209.7" r="4.6" fill="#b9aea8"/>
<rect x="1705" y="214" width="23" height="22" fill="#5c3129" rx="7"/>
<rect x="1690" y="224" width="41" height="30" fill="#1b1b1e"/>
<rect x="1730.5" y="224" width="56.5" height="30" fill="#19191c"/>
<rect x="1748.5" y="224" width="2" height="30" fill="#4a4640"/>
<rect x="1768" y="224" width="2" height="30" fill="#4a4640"/>
<circle cx="1849" cy="217" r="4.4" fill="#3a2f2a"/>
<rect x="1836" y="223" width="23" height="14" fill="#2a2e3a" rx="6"/>
<rect x="1825" y="225" width="13.5" height="12.5" fill="#eef0f2" rx="3"/>
<rect x="1833" y="234.7" width="25.6" height="18" fill="#a9b1ba" rx="4"/>
<circle cx="1870" cy="219" r="4.3" fill="#d8d2cc"/>
<rect x="1861" y="224" width="18" height="13" fill="#3a3e4a" rx="5"/>
<rect x="1866" y="223" width="8" height="5" fill="#e8e8ea" rx="2"/>
<rect x="1860.6" y="233" width="25" height="20" fill="#a22433" rx="2"/>
<circle cx="1897.7" cy="214.5" r="4.8" fill="#d9c3b6"/>
<rect x="1884" y="220.5" width="27" height="15" fill="#b1524a" rx="6"/>
<rect x="1887" y="234.7" width="34" height="18" fill="#6b6f79" rx="2"/>
<rect x="1911" y="206" width="10" height="46" fill="#6a5040"/>
</g></g>
<rect x="1696" y="250.8" width="224" height="1.2" fill="#3a3a3a"/>
<rect x="1696" y="232" width="93" height="19.5" fill="#1d1d1d" opacity="0.78"/>
<text x="1700.8" y="245.5" font-size="13.8" fill="#ffffff" textLength="85.5" lengthAdjust="spacingAndGlyphs">Meeting Room</text>
</svg>
</body></html>
